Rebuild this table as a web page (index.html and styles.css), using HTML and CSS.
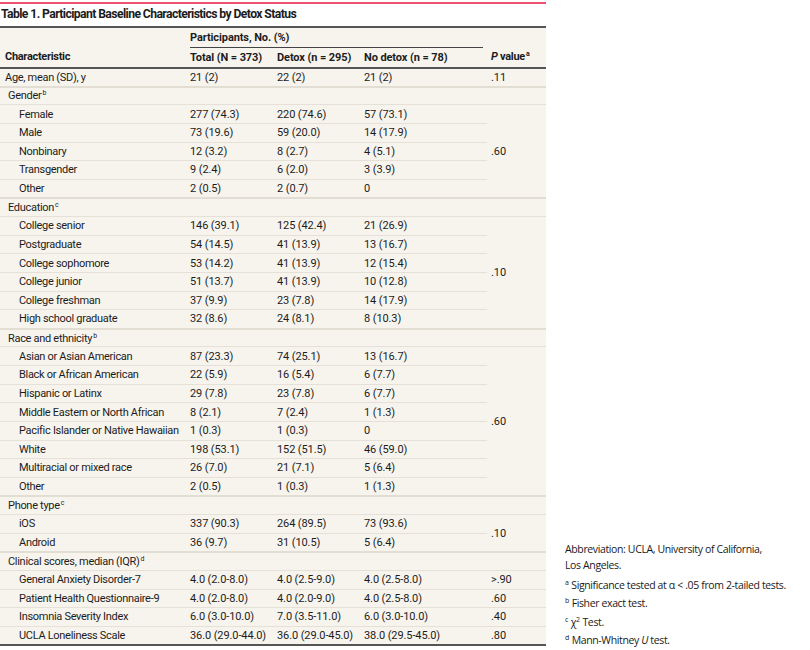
FILE: index.html
```html
<!DOCTYPE html>
<html lang="en">
<head>
<meta charset="utf-8">
<title>Table 1</title>
<link rel="stylesheet" href="styles.css">
</head>
<body>
<div class="page">
  <div class="table-wrap">
    <div class="accent"></div>
    <div class="title">Table 1. Participant Baseline Characteristics by Detox Status</div>
    <div class="grid">
      <div class="h-char">Characteristic</div>
      <div class="h-group">Participants, No. (%)</div>
      <div class="h-p"><span><span class="it">P</span> value<sup>a</sup></span></div>
      <div class="h-col">Total (N = 373)</div>
      <div class="h-col">Detox (n = 295)</div>
      <div class="h-col">No detox (n = 78)</div>

      <div class="c lbl first">Age, mean (SD), y</div><div class="c first">21 (2)</div><div class="c first">22 (2)</div><div class="c first">21 (2)</div><div class="c first p">.11</div>

      <div class="c lbl grp"><span>Gender<sup>b</sup></span></div><div class="c grp"></div><div class="c grp"></div><div class="c grp"></div><div class="c grp p"></div>
      <div class="c lbl sub">Female</div><div class="c">277 (74.3)</div><div class="c">220 (74.6)</div><div class="c">57 (73.1)</div><div class="c p span5">.60</div>
      <div class="c lbl sub">Male</div><div class="c">73 (19.6)</div><div class="c">59 (20.0)</div><div class="c">14 (17.9)</div>
      <div class="c lbl sub">Nonbinary</div><div class="c">12 (3.2)</div><div class="c">8 (2.7)</div><div class="c">4 (5.1)</div>
      <div class="c lbl sub">Transgender</div><div class="c">9 (2.4)</div><div class="c">6 (2.0)</div><div class="c">3 (3.9)</div>
      <div class="c lbl sub">Other</div><div class="c">2 (0.5)</div><div class="c">2 (0.7)</div><div class="c">0</div>

      <div class="c lbl grp"><span>Education<sup>c</sup></span></div><div class="c grp"></div><div class="c grp"></div><div class="c grp"></div><div class="c grp p"></div>
      <div class="c lbl sub">College senior</div><div class="c">146 (39.1)</div><div class="c">125 (42.4)</div><div class="c">21 (26.9)</div><div class="c p span6">.10</div>
      <div class="c lbl sub">Postgraduate</div><div class="c">54 (14.5)</div><div class="c">41 (13.9)</div><div class="c">13 (16.7)</div>
      <div class="c lbl sub">College sophomore</div><div class="c">53 (14.2)</div><div class="c">41 (13.9)</div><div class="c">12 (15.4)</div>
      <div class="c lbl sub">College junior</div><div class="c">51 (13.7)</div><div class="c">41 (13.9)</div><div class="c">10 (12.8)</div>
      <div class="c lbl sub">College freshman</div><div class="c">37 (9.9)</div><div class="c">23 (7.8)</div><div class="c">14 (17.9)</div>
      <div class="c lbl sub">High school graduate</div><div class="c">32 (8.6)</div><div class="c">24 (8.1)</div><div class="c">8 (10.3)</div>

      <div class="c lbl grp"><span>Race and ethnicity<sup>b</sup></span></div><div class="c grp"></div><div class="c grp"></div><div class="c grp"></div><div class="c grp p"></div>
      <div class="c lbl sub">Asian or Asian American</div><div class="c">87 (23.3)</div><div class="c">74 (25.1)</div><div class="c">13 (16.7)</div><div class="c p span8">.60</div>
      <div class="c lbl sub">Black or African American</div><div class="c">22 (5.9)</div><div class="c">16 (5.4)</div><div class="c">6 (7.7)</div>
      <div class="c lbl sub">Hispanic or Latinx</div><div class="c">29 (7.8)</div><div class="c">23 (7.8)</div><div class="c">6 (7.7)</div>
      <div class="c lbl sub">Middle Eastern or North African</div><div class="c">8 (2.1)</div><div class="c">7 (2.4)</div><div class="c">1 (1.3)</div>
      <div class="c lbl sub">Pacific Islander or Native Hawaiian</div><div class="c">1 (0.3)</div><div class="c">1 (0.3)</div><div class="c">0</div>
      <div class="c lbl sub">White</div><div class="c">198 (53.1)</div><div class="c">152 (51.5)</div><div class="c">46 (59.0)</div>
      <div class="c lbl sub">Multiracial or mixed race</div><div class="c">26 (7.0)</div><div class="c">21 (7.1)</div><div class="c">5 (6.4)</div>
      <div class="c lbl sub">Other</div><div class="c">2 (0.5)</div><div class="c">1 (0.3)</div><div class="c">1 (1.3)</div>

      <div class="c lbl grp"><span>Phone type<sup>c</sup></span></div><div class="c grp"></div><div class="c grp"></div><div class="c grp"></div><div class="c grp p"></div>
      <div class="c lbl sub">iOS</div><div class="c">337 (90.3)</div><div class="c">264 (89.5)</div><div class="c">73 (93.6)</div><div class="c p span2">.10</div>
      <div class="c lbl sub">Android</div><div class="c">36 (9.7)</div><div class="c">31 (10.5)</div><div class="c">5 (6.4)</div>

      <div class="c lbl grp"><span>Clinical scores, median (IQR)<sup>d</sup></span></div><div class="c grp"></div><div class="c grp"></div><div class="c grp"></div><div class="c grp p"></div>
      <div class="c lbl sub">General Anxiety Disorder-7</div><div class="c">4.0 (2.0-8.0)</div><div class="c">4.0 (2.5-9.0)</div><div class="c">4.0 (2.5-8.0)</div><div class="c p">&gt;.90</div>
      <div class="c lbl sub">Patient Health Questionnaire-9</div><div class="c">4.0 (2.0-8.0)</div><div class="c">4.0 (2.0-9.0)</div><div class="c">4.0 (2.5-8.0)</div><div class="c p">.60</div>
      <div class="c lbl sub">Insomnia Severity Index</div><div class="c">6.0 (3.0-10.0)</div><div class="c">7.0 (3.5-11.0)</div><div class="c">6.0 (3.0-10.0)</div><div class="c p">.40</div>
      <div class="c lbl sub">UCLA Loneliness Scale</div><div class="c">36.0 (29.0-44.0)</div><div class="c">36.0 (29.0-45.0)</div><div class="c">38.0 (29.5-45.0)</div><div class="c p">.80</div>
    </div>
  </div>
  <aside class="notes">
    <p class="abbr">Abbreviation: UCLA, University of California, Los Angeles.</p>
    <p><sup>a</sup> Significance tested at α &lt; .05 from 2-tailed tests.</p>
    <p><sup>b</sup> Fisher exact test.</p>
    <p><sup>c</sup> χ<sup>2</sup> Test.</p>
    <p><sup>d</sup> Mann-Whitney <span class="it">U</span> test.</p>
  </aside>
</div>
</body>
</html>
```

FILE: styles.css
```css
* { box-sizing: border-box; }
html, body { margin: 0; padding: 0; background: #ffffff; }
body {
  font-family: Roboto, "Liberation Sans", sans-serif;
  color: #1c1c1c;
}
.page {
  display: flex;
  align-items: flex-start;
  width: 810px;
  height: 650px;
}
.table-wrap {
  width: 546px;
  flex: none;
}
.accent {
  margin-top: 2px;
  height: 2px;
  background: #f2506f;
}
.title {
  height: 24px;
  display: flex;
  align-items: center;
  padding: 0 0 3px 1px;
  font-weight: 700;
  font-size: 12.2px;
  letter-spacing: -0.6px;
  border-bottom: 2px solid #555555;
}
.grid {
  display: grid;
  grid-template-columns: 185px 87px 87px 128px 59px;
  grid-template-rows: 20px 19px repeat(31, 18.63px);
  background: #f7f4ee;
  border-bottom: 2px solid #555555;
  font-size: 11px;
  letter-spacing: -0.1px;
}
.grid sup { font-size: 7px; line-height: 0; vertical-align: 4px; letter-spacing: 0; margin-left: 1px; }
.it { font-style: italic; }
.h-char {
  grid-column: 1; grid-row: 1 / span 2;
  display: flex; align-items: flex-end;
  padding: 0 0 4px 5px;
  font-weight: 700;
  letter-spacing: -0.3px;
}
.h-group {
  grid-column: 2 / span 3; grid-row: 1;
  margin: 0 4px 0 5px;
  display: flex; align-items: center;
  border-bottom: 1px solid #444444;
  font-weight: 700;
}
.h-p {
  grid-column: 5; grid-row: 1 / span 2;
  display: flex; align-items: flex-end;
  padding: 0 0 4px 4px;
  font-weight: 700;
  letter-spacing: -0.3px;
}
.h-col {
  grid-row: 2;
  display: flex; align-items: center;
  padding-left: 5px;
  font-weight: 700;
}
.c {
  display: flex;
  align-items: center;
  padding-left: 5px;
  border-top: 1px solid #e5e1d8;
  white-space: nowrap;
}
.c.lbl { letter-spacing: -0.3px; }
.c.first { border-top: 2px solid #555555; }
.c.grp { border-top: 2px solid #e2ded4; }
.lbl.grp { padding-left: 8px; }
.lbl.sub { padding-left: 19px; }
.c.p { padding-left: 4px; grid-column: 5; }
.span2 { grid-row: span 2; }
.span5 { grid-row: span 5; }
.span6 { grid-row: span 6; }
.span8 { grid-row: span 8; }
.notes {
  align-self: flex-end;
  margin-left: 19px;
  width: 240px;
  font-family: "Open Sans", sans-serif;
  font-size: 10.5px;
  letter-spacing: -0.37px;
  color: #1a1a1a;
}
.notes p { margin: 0; line-height: 18.6px; }
.notes p.abbr { width: 200px; line-height: 16px; margin-bottom: 2.5px; }
.notes sup { font-size: 7px; line-height: 0; vertical-align: 4px; letter-spacing: 0; }
```
